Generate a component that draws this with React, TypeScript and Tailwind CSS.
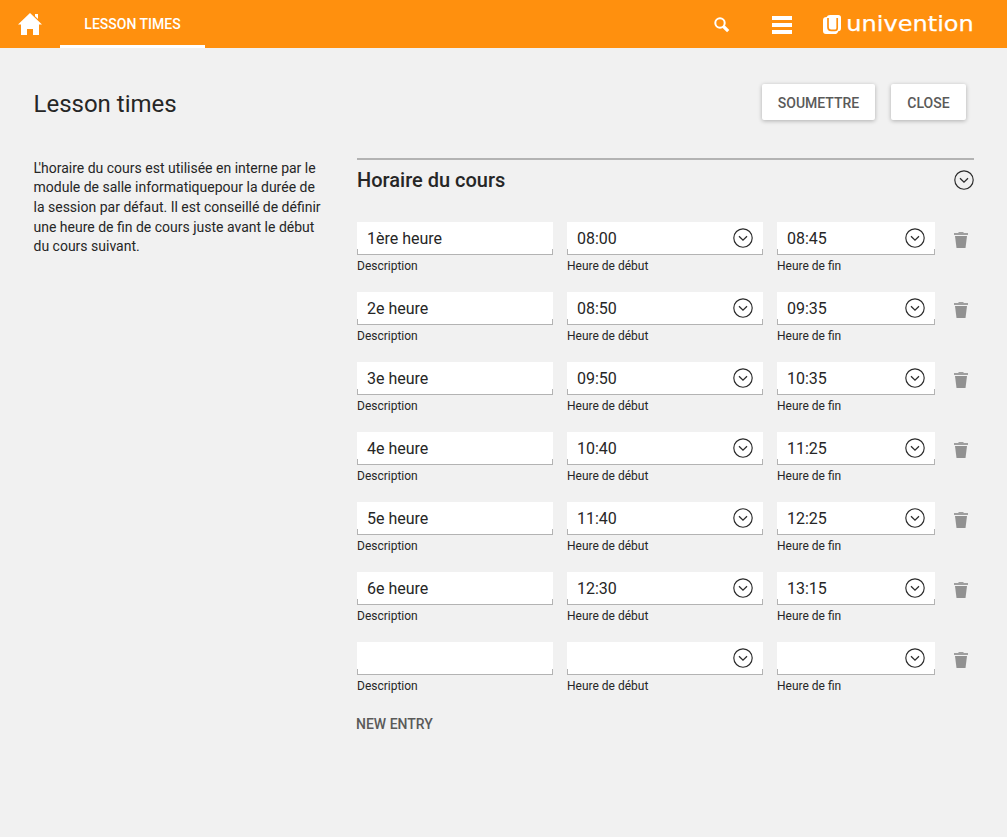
const lessons = [
  { name: "1ère heure", start: "08:00", end: "08:45" },
  { name: "2e heure", start: "08:50", end: "09:35" },
  { name: "3e heure", start: "09:50", end: "10:35" },
  { name: "4e heure", start: "10:40", end: "11:25" },
  { name: "5e heure", start: "11:40", end: "12:25" },
  { name: "6e heure", start: "12:30", end: "13:15" },
  { name: "", start: "", end: "" },
];

function HomeIcon() {
  return (
    <svg width="24" height="22" viewBox="0 0 24 22" fill="#fff">
      <path d="M12 0 24 11.6H21V22H15V16H9V22H3V11.6H0Z" />
      <path d="M17 1H20V6L17 3.2Z" />
    </svg>
  );
}

function SearchIcon() {
  return (
    <svg width="16" height="16" viewBox="0 0 16 16" fill="none" stroke="#fff">
      <circle cx="6" cy="6" r="4.7" strokeWidth="2" />
      <path d="M9.5 9.5 14.2 14.2" strokeWidth="3.2" />
    </svg>
  );
}

function UniventionLogo() {
  return (
    <svg width="152" height="24" viewBox="0 0 152 24" overflow="visible">
      <path
        d="M8 3H16.2Q19 3 19 5.8V16.2Q19 19 16.2 19.2Q15.6 22 12.8 22H4Q1 22 1 19V8Q1 5.2 4.6 5Q5.4 3 8 3Z"
        fill="#fff"
      />
      <path d="M6 6V15.2Q6 18.4 9.2 18.4H13Q15.2 18.4 15.2 16V6" fill="none" stroke="#ff900e" strokeWidth="1.7" />
      <text
        x="24.3"
        y="19"
        fill="#fff"
        stroke="#fff"
        strokeWidth="0.25"
        fontFamily="DejaVu Sans, sans-serif"
        fontSize="22"
        textLength="127.5"
        lengthAdjust="spacingAndGlyphs"
      >
        univention
      </text>
    </svg>
  );
}

function ChevronCircle() {
  return (
    <svg className="shrink-0" width="20" height="20" viewBox="0 0 20 20" fill="none" stroke="#2b2b2b">
      <circle cx="10" cy="10" r="9.2" strokeWidth="1.15" />
      <path d="M6 8.3 10 12.1 14 8.3" strokeWidth="1.3" />
    </svg>
  );
}

function TrashIcon() {
  return (
    <svg width="14" height="17" viewBox="0 0 14 17" fill="#919191">
      <path d="M0 1H4.5V0H9.5V1H14V3H0Z" fillOpacity="0.85" />
      <path d="M1 4H13L11.5 16H2.5Z" />
    </svg>
  );
}

function Field({ value, label, select = false }: { value: string; label: string; select?: boolean }) {
  return (
    <div>
      <div className="relative flex h-[33px] items-center justify-between bg-white pr-[10px] pb-px pl-[10px] text-base leading-[30px]">
        <span className="pt-[2px]">{value}</span>
        {select && <ChevronCircle />}
        <span className="absolute inset-x-0 bottom-0 h-[6px] border-x border-b border-[#b3b3b3]" />
      </div>
      <div className="pt-[3px] text-xs leading-4">{label}</div>
    </div>
  );
}

function ActionButton({ children, width }: { children: string; width: string }) {
  return (
    <button
      className={`${width} h-9 rounded-[2px] bg-white pt-[2px] text-sm font-medium text-[#5a5a59] shadow-[0_1px_4px_rgba(0,0,0,0.28)]`}
    >
      {children}
    </button>
  );
}

export default function App() {
  return (
    <div className="min-h-[837px] w-[1007px] bg-[#f1f1f1] font-['Roboto',sans-serif] text-[#262626]">
      <header className="flex h-12 bg-[#ff900e] text-white">
        <div className="flex w-15 items-center justify-center">
          <HomeIcon />
        </div>
        <div className="flex h-12 w-[145px] items-center justify-center border-b-[3px] border-white pt-[3px] text-sm font-medium">
          LESSON TIMES
        </div>
        <div className="ml-auto flex items-center pr-[33px]">
          <div className="mr-[42px] pt-[2px]">
            <SearchIcon />
          </div>
          <div className="mr-[30px] flex flex-col gap-[3px] pt-[2px]">
            <span className="h-1 w-5 bg-white" />
            <span className="h-1 w-5 bg-white" />
            <span className="h-1 w-5 bg-white" />
          </div>
          <UniventionLogo />
        </div>
      </header>

      <div className="flex items-center justify-between pt-9 pr-[41px] pl-[33.5px]">
        <h1 className="pt-[3px] text-2xl leading-8">Lesson times</h1>
        <div className="flex gap-4">
          <ActionButton width="w-[113px]">SOUMETTRE</ActionButton>
          <ActionButton width="w-[75px]">CLOSE</ActionButton>
        </div>
      </div>

      <main className="flex pt-[38px] pl-[33.5px]">
        <p className="w-[323.5px] pt-[0.9px] text-sm leading-[19.6px]">
          <span className="tracking-[-2.5px]">L</span>'horaire du cours est utilisée en interne par le
          <br />
          module de salle informatiquepour la durée de
          <br />
          la session par défaut. Il est conseillé de définir
          <br />
          une heure de fin de cours juste avant le début
          <br />
          du cours suivant.
        </p>
        <section className="w-[617px] border-t-2 border-[#b3b3b3]">
          <div className="flex h-10 items-center justify-between">
            <h2 className="text-xl font-medium">Horaire du cours</h2>
            <ChevronCircle />
          </div>
          <div className="flex flex-col gap-[18px] pt-[22px]">
            {lessons.map((lesson, index) => (
              <div key={index} className="grid grid-cols-[196px_196px_158px_14px] gap-x-[14px]">
                <Field value={lesson.name} label="Description" />
                <Field value={lesson.start} label="Heure de début" select />
                <Field value={lesson.end} label="Heure de fin" select />
                <div className="pt-[10px] pl-[5px]">
                  <TrashIcon />
                </div>
              </div>
            ))}
          </div>
          <button className="mt-[20px] -ml-px block text-sm leading-5 font-medium text-[#5a5a59]">NEW ENTRY</button>
        </section>
      </main>
    </div>
  );
}
